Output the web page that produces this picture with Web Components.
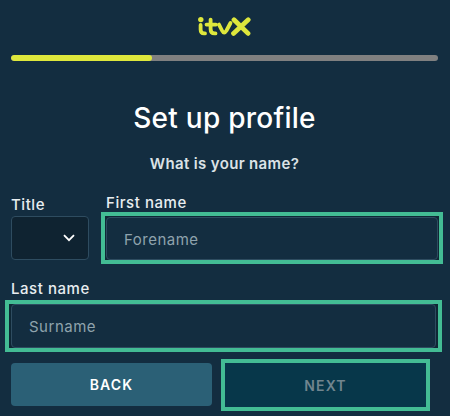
<!DOCTYPE html>
<html>
<head>
<meta charset="utf-8">
<title>Set up profile</title>
<style>
  html, body { margin: 0; padding: 0; background: #132d40; }
  body { font-family: Inter, "Liberation Sans", sans-serif; }
</style>
</head>
<body>
<setup-profile></setup-profile>

<script>
class ItvLogo extends HTMLElement {
  constructor() {
    super();
    this.attachShadow({mode: 'open'});
    this.shadowRoot.innerHTML = `
    <style>
      :host { display: flex; justify-content: center; }
      svg { display: block; }
    </style>
    <svg width="56" height="20" viewBox="0 0 56 20" fill="none" stroke="#dee73c" stroke-width="3.8" stroke-linecap="round" stroke-linejoin="round">
      <circle cx="3.8" cy="3.6" r="2.7" fill="#dee73c" stroke="none"/>
      <path d="M3.6 9V13.5Q3.6 17.4 7 17.4H8"/>
      <path d="M13.6 3.6V13Q13.6 17.4 17.5 17.4H18.5M9.5 8.6H19"/>
      <path d="M22 8.6L25 14.5Q27 18.6 29.5 14.5L33.5 7"/>
      <path d="M37 3.8L51 17.4M51.2 3.8L36.5 17.4" stroke-width="4.8"/>
    </svg>`;
  }
}
customElements.define('itv-logo', ItvLogo);

class ProgressBar extends HTMLElement {
  constructor() {
    super();
    this.attachShadow({mode: 'open'});
    this.shadowRoot.innerHTML = `
    <style>
      :host { display: block; height: 6px; border-radius: 3px; background: #808080; overflow: hidden; }
      div { width: 33%; height: 100%; background: #dee73c; border-radius: 3px; }
    </style>
    <div></div>`;
  }
}
customElements.define('progress-bar', ProgressBar);

class FormField extends HTMLElement {
  constructor() {
    super();
    this.attachShadow({mode: 'open'});
    this.shadowRoot.innerHTML = `
    <style>
      :host { display: flex; flex-direction: column; gap: 3px; min-width: 0; }
      :host([wide]) { gap: 5px; }
      label { padding-top: 2px; font-size: 15px; line-height: 20px; font-weight: 500; color: #e8edf0; letter-spacing: 0.55px; }
      .ring {
        outline: 4px solid #43bc94;
        padding: 1px 1px 0;
        margin: 0 -1px;
        background: #0f2735;
      }
      :host([wide]) .ring { padding: 0 2px; margin: 0 -2px; }
      .box {
        box-sizing: border-box; height: 43px; padding: 1px 17px 0;
        display: flex; align-items: center;
        background: #132d40;
        border: 1px solid #2e4c60; border-radius: 4px;
        font-size: 15px; color: #8fa3ad; letter-spacing: 0.5px;
      }
      :host([wide]) .box { height: 44px; }
    </style>
    <label>${this.getAttribute('label')}</label>
    <div class="ring"><div class="box"><slot></slot></div></div>`;
  }
}
customElements.define('form-field', FormField);

class TitleSelect extends HTMLElement {
  constructor() {
    super();
    this.attachShadow({mode: 'open'});
    this.shadowRoot.innerHTML = `
    <style>
      :host { display: flex; flex-direction: column; gap: 1px; }
      label { padding-top: 2px; font-size: 15px; line-height: 20px; font-weight: 500; color: #e8edf0; letter-spacing: 0.55px; }
      .box {
        box-sizing: border-box; height: 44px; padding-right: 13px;
        display: flex; align-items: center; justify-content: flex-end;
        background: #0f2331; border: 1px solid #2e4c60; border-radius: 4px;
      }
    </style>
    <label>Title</label>
    <div class="box">
      <svg width="12" height="8" viewBox="0 0 12 8" fill="none" stroke="#fff" stroke-width="1.8"><path d="M1 1.2L6 6.2L11 1.2"/></svg>
    </div>`;
  }
}
customElements.define('title-select', TitleSelect);

class FormButton extends HTMLElement {
  constructor() {
    super();
    this.attachShadow({mode: 'open'});
    this.shadowRoot.innerHTML = `
    <style>
      :host {
        box-sizing: border-box; display: flex; align-items: center; justify-content: center;
        height: 43px; border-radius: 4px; background: #2b6076; color: #fff;
        font-size: 14px; font-weight: 600; letter-spacing: 1.1px;
      }
      :host([disabled]) {
        height: 44px;
        background: #07374a; color: #71858f; border-radius: 0;
        outline: 4px solid #43bc94; outline-offset: 0;
      }
    </style>
    <slot></slot>`;
  }
}
customElements.define('form-button', FormButton);

class SetupProfile extends HTMLElement {
  constructor() {
    super();
    this.attachShadow({mode: 'open'});
    this.shadowRoot.innerHTML = `
    <style>
      :host { display: block; box-sizing: border-box; height: 416px; padding: 16px 12px 0 11px; color: #fff; }
      itv-logo { margin-bottom: 19px; }
      h1 { margin: 39px 0 0; font-size: 28px; line-height: 36px; font-weight: 500; text-align: center; letter-spacing: 0.25px; }
      p { margin: 18px 0 0; font-size: 15px; line-height: 20px; font-weight: 600; text-align: center; color: #dbe2e6; letter-spacing: 0.35px; }
      .names { display: grid; grid-template-columns: 78px 1fr; gap: 17px; margin-top: 17px; align-items: end; }
      .last { margin-top: 17px; margin-right: 2px; }
      .buttons { display: grid; grid-template-columns: 201px 201px; gap: 13px; margin-top: 15px; align-items: start; }
    </style>
    <itv-logo></itv-logo>
    <progress-bar></progress-bar>
    <h1>Set up profile</h1>
    <p>What is your name?</p>
    <div class="names">
      <title-select></title-select>
      <form-field label="First name">Forename</form-field>
    </div>
    <form-field class="last" label="Last name" wide>Surname</form-field>
    <div class="buttons">
      <form-button>BACK</form-button>
      <form-button disabled>NEXT</form-button>
    </div>`;
  }
}
customElements.define('setup-profile', SetupProfile);
</script>
</body>
</html>
